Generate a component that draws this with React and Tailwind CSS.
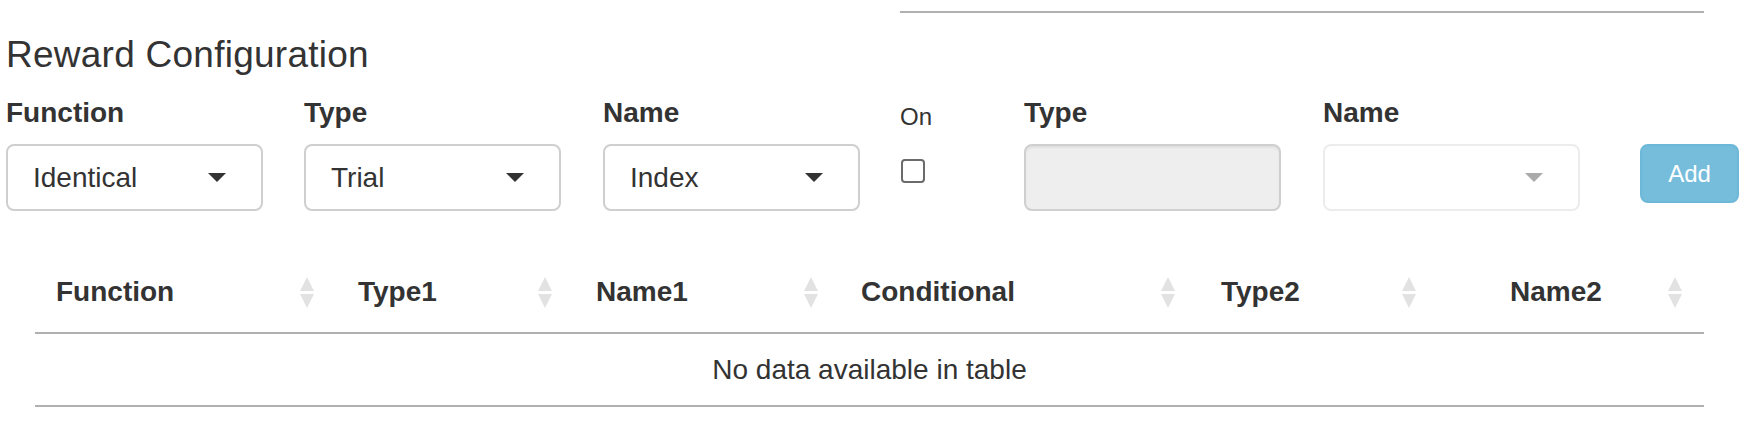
import React from "react";

const FONT = { fontFamily: '"Liberation Sans", Arial, sans-serif' };

function Caret({ color = "#333" }) {
  return (
    <svg width="18" height="9" viewBox="0 0 18 9">
      <path d="M0 0 L18 0 L9 9 Z" fill={color} />
    </svg>
  );
}

function SortIcon() {
  return (
    <svg width="14" height="31" viewBox="0 0 14 31">
      <path d="M7 0 L14 14 L0 14 Z" fill="#e2e2e2" />
      <path d="M0 17 L14 17 L7 31 Z" fill="#e2e2e2" />
    </svg>
  );
}

function Select({ value, muted }) {
  return (
    <div
      className={`flex h-[67px] w-[257px] items-center justify-between rounded-[8px] border-2 bg-white pl-[25px] pr-[35px] text-[28px] text-[#333] ${
        muted ? "border-[#ececec]" : "border-[#cfcfcf]"
      }`}
    >
      <span>{value}</span>
      <Caret color={muted ? "#aaa" : "#333"} />
    </div>
  );
}

const COLUMNS = [
  { label: "Function", w: "w-[301px]", pl: "pl-[21px]" },
  { label: "Type1", w: "w-[238px]", pl: "pl-[22px]" },
  { label: "Name1", w: "w-[266px]", pl: "pl-[22px]" },
  { label: "Conditional", w: "w-[357px]", pl: "pl-[21px]" },
  { label: "Type2", w: "w-[241px]", pl: "pl-[24px]" },
  { label: "Name2", w: "w-[266px]", pl: "pl-[72px]" },
];

export default function App() {
  return (
    <div className="h-[422px] w-[1758px] overflow-hidden bg-white text-[#333]" style={FONT}>
      {/* bottom edge of the previous block */}
      <div className="ml-[900px] mt-[11px] h-[2px] w-[804px] bg-[#b0b0b0]" />

      <h4 className="ml-[6px] mt-[22px] text-[37px] leading-[40px] font-normal tracking-[0.25px]">Reward Configuration</h4>

      {/* ---------- form row ---------- */}
      <div className="mt-[22px] flex items-start pl-[6px]">
        <div className="w-[298px]">
          <label className="block text-[28px] font-bold leading-[32px]">Function</label>
          <div className="mt-[15px]">
            <Select value="Identical" />
          </div>
        </div>
        <div className="w-[299px]">
          <label className="block text-[28px] font-bold leading-[32px]">Type</label>
          <div className="mt-[15px]">
            <Select value="Trial" />
          </div>
        </div>
        <div className="w-[297px]">
          <label className="block text-[28px] font-bold leading-[32px]">Name</label>
          <div className="mt-[15px]">
            <Select value="Index" />
          </div>
        </div>
        <div className="w-[124px]">
          <label className="block pt-[4px] text-[24px] leading-[32px]">On</label>
          <div className="ml-[1px] mt-[26px] h-[24px] w-[24px] rounded-[4px] border-2 border-[#6b6b6b] bg-white" />
        </div>
        <div className="w-[299px]">
          <label className="block text-[28px] font-bold leading-[32px]">Type</label>
          <div className="mt-[15px] h-[67px] w-[257px] rounded-[8px] border-2 border-[#cfcfcf] bg-[#eeeeee] shadow-[inset_0_2px_2px_rgba(0,0,0,0.06)]" />
        </div>
        <div className="w-[317px]">
          <label className="block text-[28px] font-bold leading-[32px]">Name</label>
          <div className="mt-[15px]">
            <Select value="" muted />
          </div>
        </div>
        <div className="pt-[47px]">
          <button className="h-[59px] w-[99px] rounded-[8px] border-2 border-[#6db7d9] bg-[#76bddc] text-[24px] text-white">
            Add
          </button>
        </div>
      </div>

      {/* ---------- table ---------- */}
      <div className="ml-[35px] mt-[39px] w-[1669px]">
        <div className="flex border-b-2 border-[#b0b0b0]">
          {COLUMNS.map((c) => (
            <div key={c.label} className={`${c.w} ${c.pl} flex items-center justify-between pb-[20px] pr-[22px] pt-[22px]`}>
              <span className="text-[28px] font-bold leading-[40px]">{c.label}</span>
              <SortIcon />
            </div>
          ))}
        </div>
        <div className="border-b-2 border-[#b0b0b0] py-[16px] text-center text-[28px] leading-[39px]">
          No data available in table
        </div>
      </div>
    </div>
  );
}
